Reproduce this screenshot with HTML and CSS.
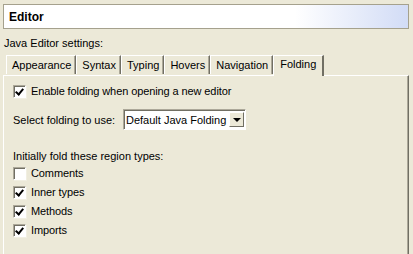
FILE: index.html
```html
<!DOCTYPE html>
<html>
<head>
<meta charset="utf-8">
<link rel="stylesheet" href="styles.css">
</head>
<body>
<div class="page">
  <div class="header"><span class="title">Editor</span></div>
  <div class="intro">Java Editor settings:</div>
  <div class="tabs">
    <div class="tab first">Appearance</div>
    <div class="tab">Syntax</div>
    <div class="tab">Typing</div>
    <div class="tab">Hovers</div>
    <div class="tab">Navigation</div>
    <div class="tab active">Folding</div>
  </div>
  <div class="panel">
    <label class="check enable"><span class="box checked"></span>Enable folding when opening a new editor</label>
    <div class="select-row">
      <span class="select-label">Select folding to use:</span>
      <div class="combo"><span class="combo-text">Default Java Folding</span><span class="combo-btn"><span class="arrow"></span></span></div>
    </div>
    <div class="group-label">Initially fold these region types:</div>
    <div class="list">
      <label class="check"><span class="box"></span>Comments</label>
      <label class="check"><span class="box checked"></span>Inner types</label>
      <label class="check"><span class="box checked"></span>Methods</label>
      <label class="check"><span class="box checked"></span>Imports</label>
    </div>
  </div>
</div>
</body>
</html>
```

FILE: styles.css
```css
html, body {
  margin: 0;
  padding: 0;
  background: #ECE9D8;
  overflow: hidden;
}
body {
  font-family: "Liberation Sans", Arial, sans-serif;
  font-size: 11px;
  color: #000;
  height: 254px;
}
.page {
  padding: 4px 4px 0 3px;
  height: 254px;
  box-sizing: border-box;
  display: flex;
  flex-direction: column;
}
.header {
  height: 23px;
  flex: none;
  border: 1px solid #A5A18D;
  background: linear-gradient(to right, #ffffff 0%, #ffffff 72%, #D2DCF6 100%);
  display: flex;
  align-items: center;
  padding-left: 5px;
}
.title {
  font-weight: bold;
  font-size: 12px;
}
.intro {
  margin-top: 8px;
  padding-left: 1px;
  line-height: 13px;
}
.tabs {
  margin-top: 4px;
  display: flex;
  align-items: flex-end;
  height: 21px;
  flex: none;
  padding-left: 3px;
  position: relative;
  z-index: 1;
}
.tab {
  height: 18px;
  line-height: 18px;
  padding: 0 4px 0 5px;
  border-top: 1px solid #fff;
  border-left: 1px solid #fff;
  border-right: 1px solid #716F64;
  box-shadow: inset -1px 0 #ACA899;
  margin-bottom: 1px;
}
.tab.active {
  height: 20px;
  line-height: 17px;
  margin-bottom: -1px;
  background: #ECE9D8;
  padding: 0 6px 0 6px;
  border-right: 2px solid #716F64;
  box-shadow: none;
}
.panel {
  flex: 1;
  border-top: 1px solid #fff;
  border-left: 1px solid #fff;
  border-right: 1px solid #716F64;
  box-shadow: inset -1px 0 #ACA899;
  padding: 9px 0 0 9px;
  display: flex;
  flex-direction: column;
}
.check {
  display: flex;
  align-items: center;
  height: 13px;
  line-height: 13px;
  letter-spacing: -0.1px;
}
.box {
  width: 11px;
  height: 11px;
  border-top: 1px solid #ACA899;
  border-left: 1px solid #ACA899;
  border-right: 1px solid #fff;
  border-bottom: 1px solid #fff;
  background: #fff;
  box-shadow: inset 1px 1px #716F64, 1px 1px #F1EFE2;
  margin-right: 5px;
  position: relative;
  flex: none;
}
.box.checked::after {
  content: "";
  position: absolute;
  left: 3px;
  top: 1px;
  width: 3px;
  height: 6px;
  border-right: 2px solid #000;
  border-bottom: 2px solid #000;
  transform: rotate(40deg);
}
.select-row {
  margin-top: 11px;
  display: flex;
  align-items: center;
  height: 21px;
}
.select-label {
  width: 110px;
}
.combo {
  width: 118px;
  height: 17px;
  border-top: 1px solid #ACA899;
  border-left: 1px solid #ACA899;
  border-right: 1px solid #fff;
  border-bottom: 1px solid #fff;
  box-shadow: inset 1px 1px #716F64;
  background: #fff;
  display: flex;
  align-items: center;
  padding: 1px 1px 1px 2px;
}
.combo-text {
  flex: 1;
  white-space: nowrap;
  overflow: hidden;
}
.combo-btn {
  width: 15px;
  height: 15px;
  background: #ECE9D8;
  border-top: 1px solid #fff;
  border-left: 1px solid #fff;
  border-right: 1px solid #716F64;
  border-bottom: 1px solid #716F64;
  box-sizing: border-box;
  display: flex;
  align-items: center;
  justify-content: center;
}
.arrow {
  width: 0;
  height: 0;
  border-left: 4px solid transparent;
  border-right: 4px solid transparent;
  border-top: 4px solid #000;
}
.group-label {
  margin-top: 20px;
  line-height: 13px;
}
.list {
  margin-top: 4px;
  display: flex;
  flex-direction: column;
  gap: 6px;
}
```
